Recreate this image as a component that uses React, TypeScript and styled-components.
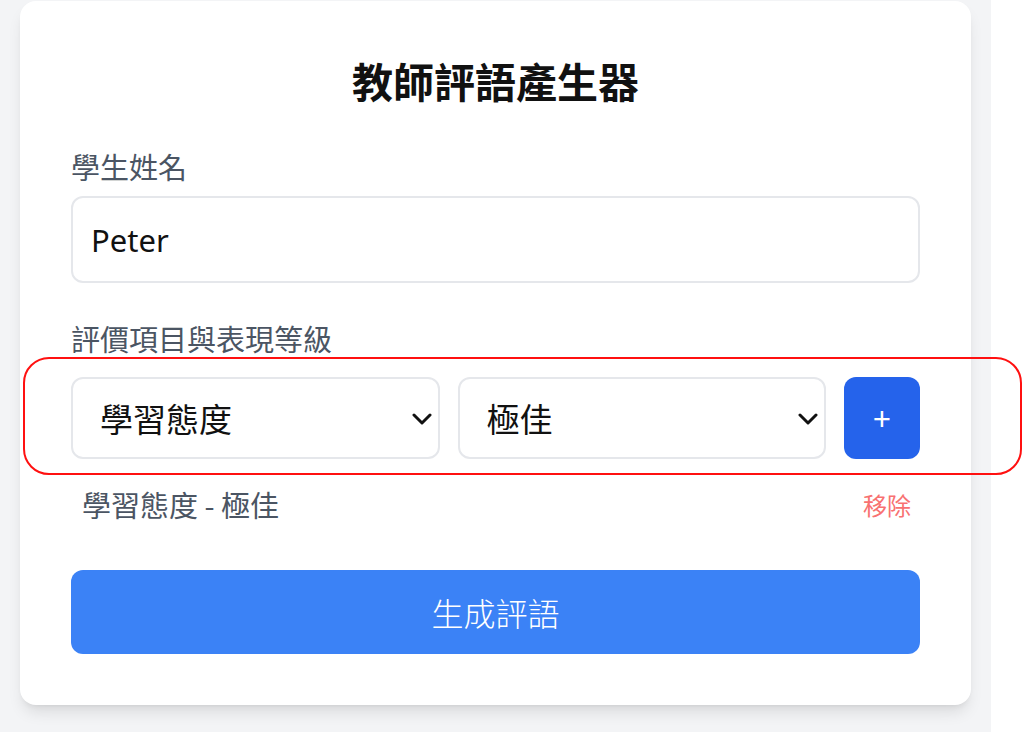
import React, { useState } from "react";
import styled, { createGlobalStyle } from "styled-components";

const GlobalStyle = createGlobalStyle`
  html, body { margin: 0; padding: 0; background: #ffffff; }
  body { font-family: "Noto Sans", "Noto Sans CJK TC", sans-serif; }
  * { box-sizing: border-box; }
`;

const Viewport = styled.div`
  position: relative;
  width: 1024px;
  height: 732px;
  overflow: hidden;
`;

const Page = styled.div`
  width: 991px;
  height: 732px;
  background: #f3f4f6;
  padding: 1px 0 0 20px;
  overflow: hidden;
`;

const Card = styled.div`
  width: 951px;
  background: #ffffff;
  border-radius: 16px;
  box-shadow: 0 10px 15px -3px rgba(0, 0, 0, 0.1), 0 4px 6px -4px rgba(0, 0, 0, 0.1);
  padding: 54px 51px 51px 51px;
  display: flex;
  flex-direction: column;
`;

const Title = styled.h1`
  margin: 0;
  text-align: center;
  font-family: "Noto Sans CJK TC", sans-serif;
  font-size: 41px;
  line-height: 50px;
  font-weight: 700;
  color: #111111;
`;

const Label = styled.label<{ $top: number }>`
  display: block;
  margin-top: ${(p) => p.$top}px;
  font-family: "Noto Sans CJK TC", sans-serif;
  font-size: 29px;
  line-height: 36px;
  color: #4b5563;
`;

const TextInput = styled.input`
  margin-top: 12px;
  width: 100%;
  height: 87px;
  border: 2px solid #e5e7eb;
  border-radius: 12px;
  padding: 0 18px;
  font-family: "Noto Sans", "Noto Sans CJK TC", sans-serif;
  font-size: 31px;
  color: #111111;
  outline: none;
  background: #fff;
`;

const SelectRow = styled.div`
  margin-top: 21px;
  display: flex;
  gap: 18px;
  height: 82px;
`;

const SelectWrap = styled.div`
  position: relative;
  flex: 1;
`;

const Select = styled.select`
  appearance: none;
  -webkit-appearance: none;
  width: 100%;
  height: 100%;
  border: 2px solid #e5e7eb;
  border-radius: 12px;
  padding: 0 40px 0 27px;
  font-family: "Noto Sans CJK TC", sans-serif;
  font-size: 33px;
  color: #111111;
  background: #fff;
  outline: none;
`;

const Chevron = styled.svg`
  position: absolute;
  right: 8px;
  top: 36px;
  width: 20px;
  height: 12px;
  pointer-events: none;
`;

const AddButton = styled.button`
  width: 76px;
  height: 82px;
  border: none;
  border-radius: 12px;
  background: #2563eb;
  color: #ffffff;
  font-family: "Noto Sans", sans-serif;
  font-size: 32px;
  line-height: 1;
  padding: 2px 0 0 0;
  cursor: pointer;
`;

const ItemRow = styled.div`
  margin-top: 27px;
  display: flex;
  justify-content: space-between;
  align-items: center;
  padding: 0 9px 0 11px;
  height: 36px;
`;

const ItemText = styled.span`
  font-family: "Noto Sans CJK TC", sans-serif;
  font-size: 29px;
  color: #4b5563;
`;

const RemoveLink = styled.button`
  border: none;
  background: none;
  padding: 0;
  font-family: "Noto Sans CJK TC", sans-serif;
  font-size: 24px;
  color: #f87171;
  cursor: pointer;
`;

const GenerateButton = styled.button`
  margin-top: 48px;
  width: 100%;
  height: 84px;
  border: none;
  border-radius: 12px;
  background: #3b82f6;
  color: #ffffff;
  font-family: "Noto Sans CJK TC", sans-serif;
  font-size: 32px;
  font-weight: 300;
  cursor: pointer;
`;

const Highlight = styled.div`
  position: absolute;
  left: 23px;
  top: 357px;
  width: 999px;
  height: 118px;
  border: 2px solid #ff1010;
  border-radius: 26px;
  pointer-events: none;
`;

const ChevronIcon = () => (
  <Chevron viewBox="0 0 20 12" fill="none">
    <path d="M2 2 L10 10 L18 2" stroke="#111" strokeWidth="3" strokeLinecap="round" strokeLinejoin="round" />
  </Chevron>
);

export default function App() {
  const [name, setName] = useState("Peter");
  return (
    <>
      <GlobalStyle />
      <Viewport>
        <Page>
          <Card>
            <Title>教師評語產生器</Title>
            <Label $top={43}>學生姓名</Label>
            <TextInput value={name} onChange={(e) => setName(e.target.value)} />
            <Label $top={37}>評價項目與表現等級</Label>
            <SelectRow>
              <SelectWrap>
                <Select defaultValue="學習態度">
                  <option>學習態度</option>
                  <option>課堂參與</option>
                  <option>作業表現</option>
                </Select>
                <ChevronIcon />
              </SelectWrap>
              <SelectWrap>
                <Select defaultValue="極佳">
                  <option>極佳</option>
                  <option>良好</option>
                  <option>尚可</option>
                </Select>
                <ChevronIcon />
              </SelectWrap>
              <AddButton>+</AddButton>
            </SelectRow>
            <ItemRow>
              <ItemText>學習態度 - 極佳</ItemText>
              <RemoveLink>移除</RemoveLink>
            </ItemRow>
            <GenerateButton>生成評語</GenerateButton>
          </Card>
        </Page>
        <Highlight />
      </Viewport>
    </>
  );
}
